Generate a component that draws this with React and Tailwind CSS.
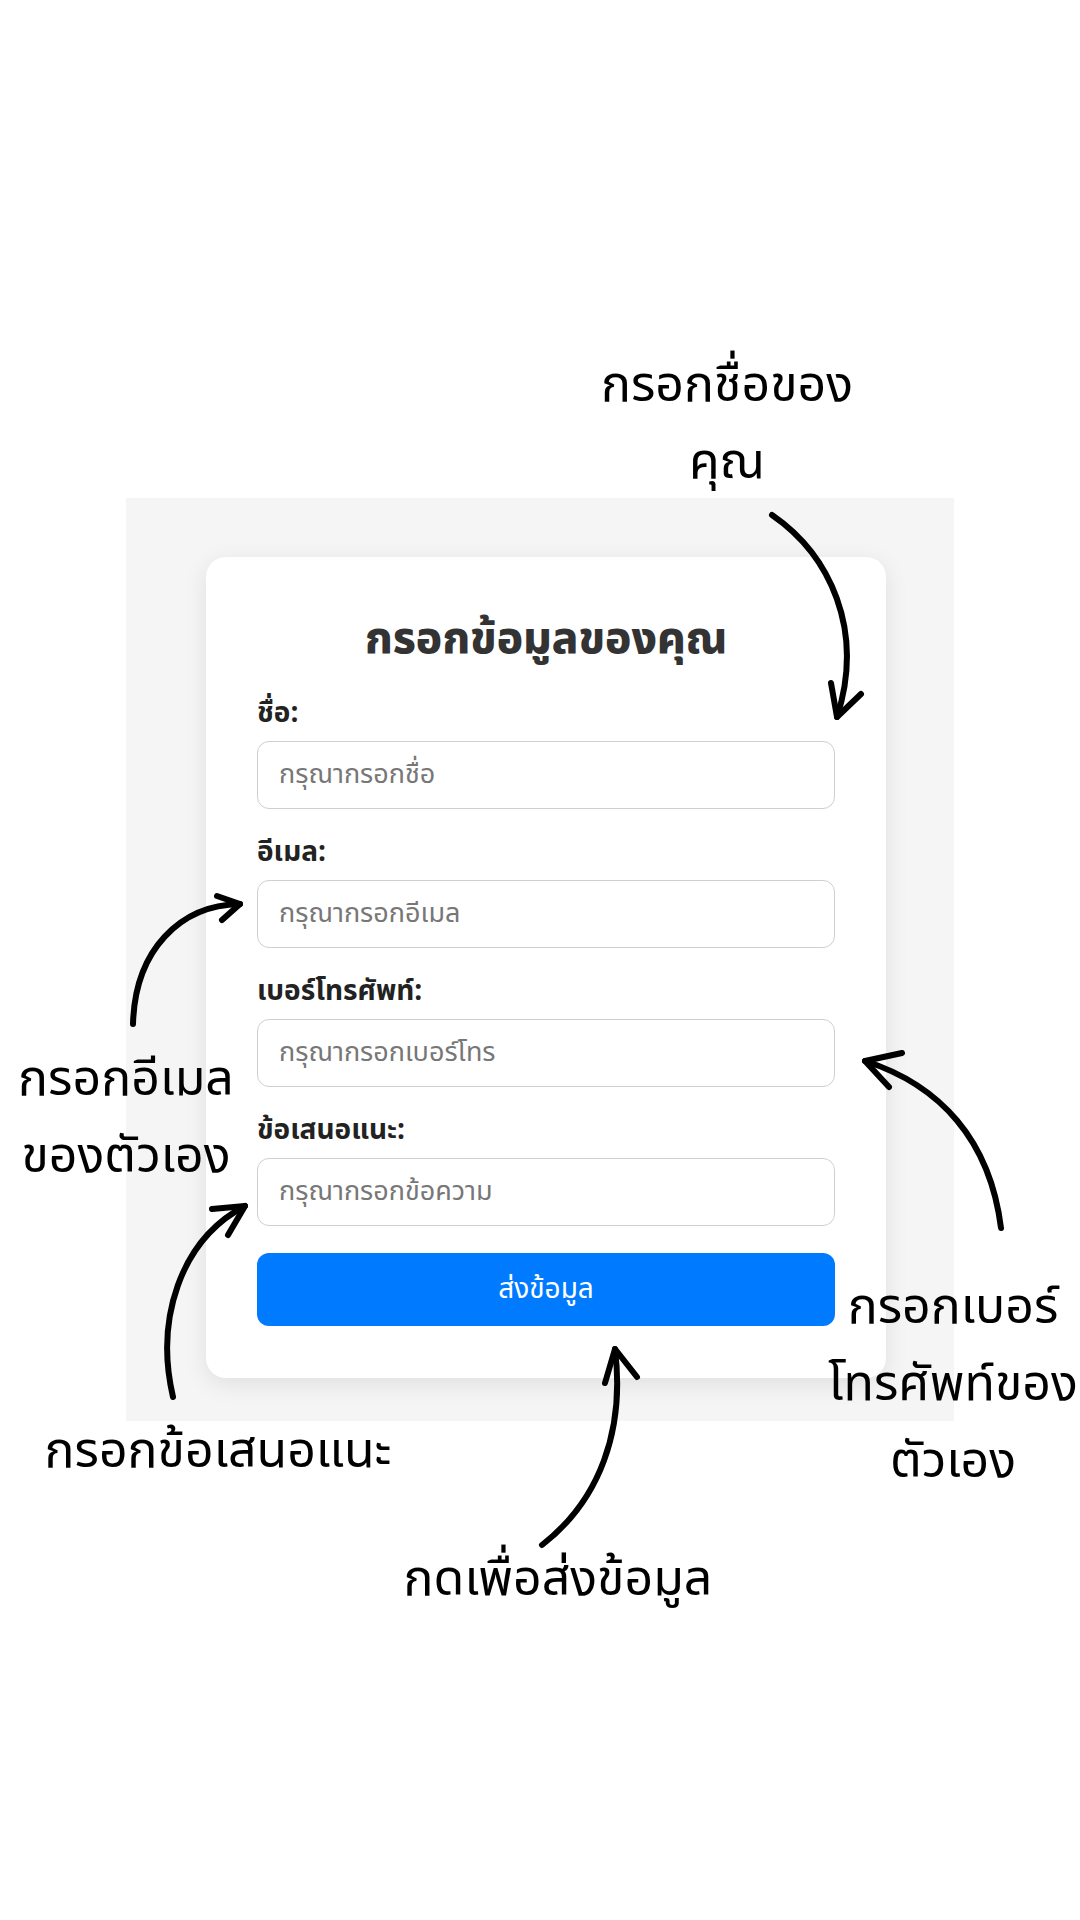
import React from "react";

const formFont = { fontFamily: "Tahoma, 'Noto Sans Thai', 'Loma', 'Garuda', 'Noto Sans', 'DejaVu Sans', sans-serif" };

function Field({ label, placeholder }) {
  return (
    <div className="flex flex-col">
      <label className="h-[32px] leading-[32px] text-[28px] font-bold text-[#222] mb-[11px]">{label}</label>
      <div className="h-[68px] rounded-[12px] border border-[#cfcfcf] bg-white flex items-center pl-[21px] text-[27px] text-[#777]">
        {placeholder}
      </div>
    </div>
  );
}

function Note({ className, lines }) {
  return (
    <div className={"absolute w-[400px] text-center text-[50px] leading-[77px] text-black " + className} style={{ fontFamily: "'Noto Sans Thai', 'Noto Sans', sans-serif" }}>
      {lines.map((l, i) => (
        <div key={i}>{l}</div>
      ))}
    </div>
  );
}

export default function App() {
  return (
    <div className="relative w-[1080px] h-[1920px] bg-white overflow-hidden">
      <div className="pt-[498px]">
        <div className="mx-auto w-[828px] h-[923px] bg-[#f4f5f4] pl-[80px] pt-[59px]" style={formFont}>
          <div className="w-[680px] h-[821px] bg-white rounded-[20px] shadow-[0_6px_24px_rgba(0,0,0,0.09)] px-[51px] pt-[57px]">
            <h2 className="text-center text-[44px] leading-[52px] font-extrabold text-[#333] mb-[32px]">กรอกข้อมูลของคุณ</h2>
            <div className="flex flex-col gap-[28px]">
              <Field label="ชื่อ:" placeholder="กรุณากรอกชื่อ" />
              <Field label="อีเมล:" placeholder="กรุณากรอกอีเมล" />
              <Field label="เบอร์โทรศัพท์:" placeholder="กรุณากรอกเบอร์โทร" />
              <Field label="ข้อเสนอแนะ:" placeholder="กรุณากรอกข้อความ" />
            </div>
            <button className="mt-[27px] w-full h-[73px] rounded-[12px] bg-[#007bff] text-white text-[28px] flex items-center justify-center">
              ส่งข้อมูล
            </button>
          </div>
        </div>
      </div>

      <Note className="left-[527px] top-[348px]" lines={["กรอกชื่อของ", "คุณ"]} />
      <Note className="left-[-74px] top-[1042px]" lines={["กรอกอีเมล", "ของตัวเอง"]} />
      <Note className="left-[18px] top-[1414px]" lines={["กรอกข้อเสนอแนะ"]} />
      <Note className="left-[358px] top-[1542px]" lines={["กดเพื่อส่งข้อมูล"]} />
      <Note className="left-[753px] top-[1270px]" lines={["กรอกเบอร์", "โทรศัพท์ของ", "ตัวเอง"]} />

      <svg className="absolute inset-0 pointer-events-none" width="1080" height="1920" viewBox="0 0 1080 1920" fill="none" stroke="black" strokeWidth="6" strokeLinecap="round" strokeLinejoin="round">
        <path d="M772 515 C830 555 865 630 837 717" />
        <path d="M831 683 L837 717 L861 694" />
        <path d="M133 1024 C135 950 180 905 240 904" />
        <path d="M217 896 L240 904 L222 920" />
        <path d="M173 1397 C155 1320 180 1240 245 1206" />
        <path d="M212 1209 L245 1206 L228 1235" />
        <path d="M542 1545 C600 1500 625 1430 615 1349" />
        <path d="M605 1383 L615 1349 L637 1377" />
        <path d="M1001 1228 C990 1140 940 1085 865 1061" />
        <path d="M902 1053 L865 1061 L889 1087" />
      </svg>
    </div>
  );
}
